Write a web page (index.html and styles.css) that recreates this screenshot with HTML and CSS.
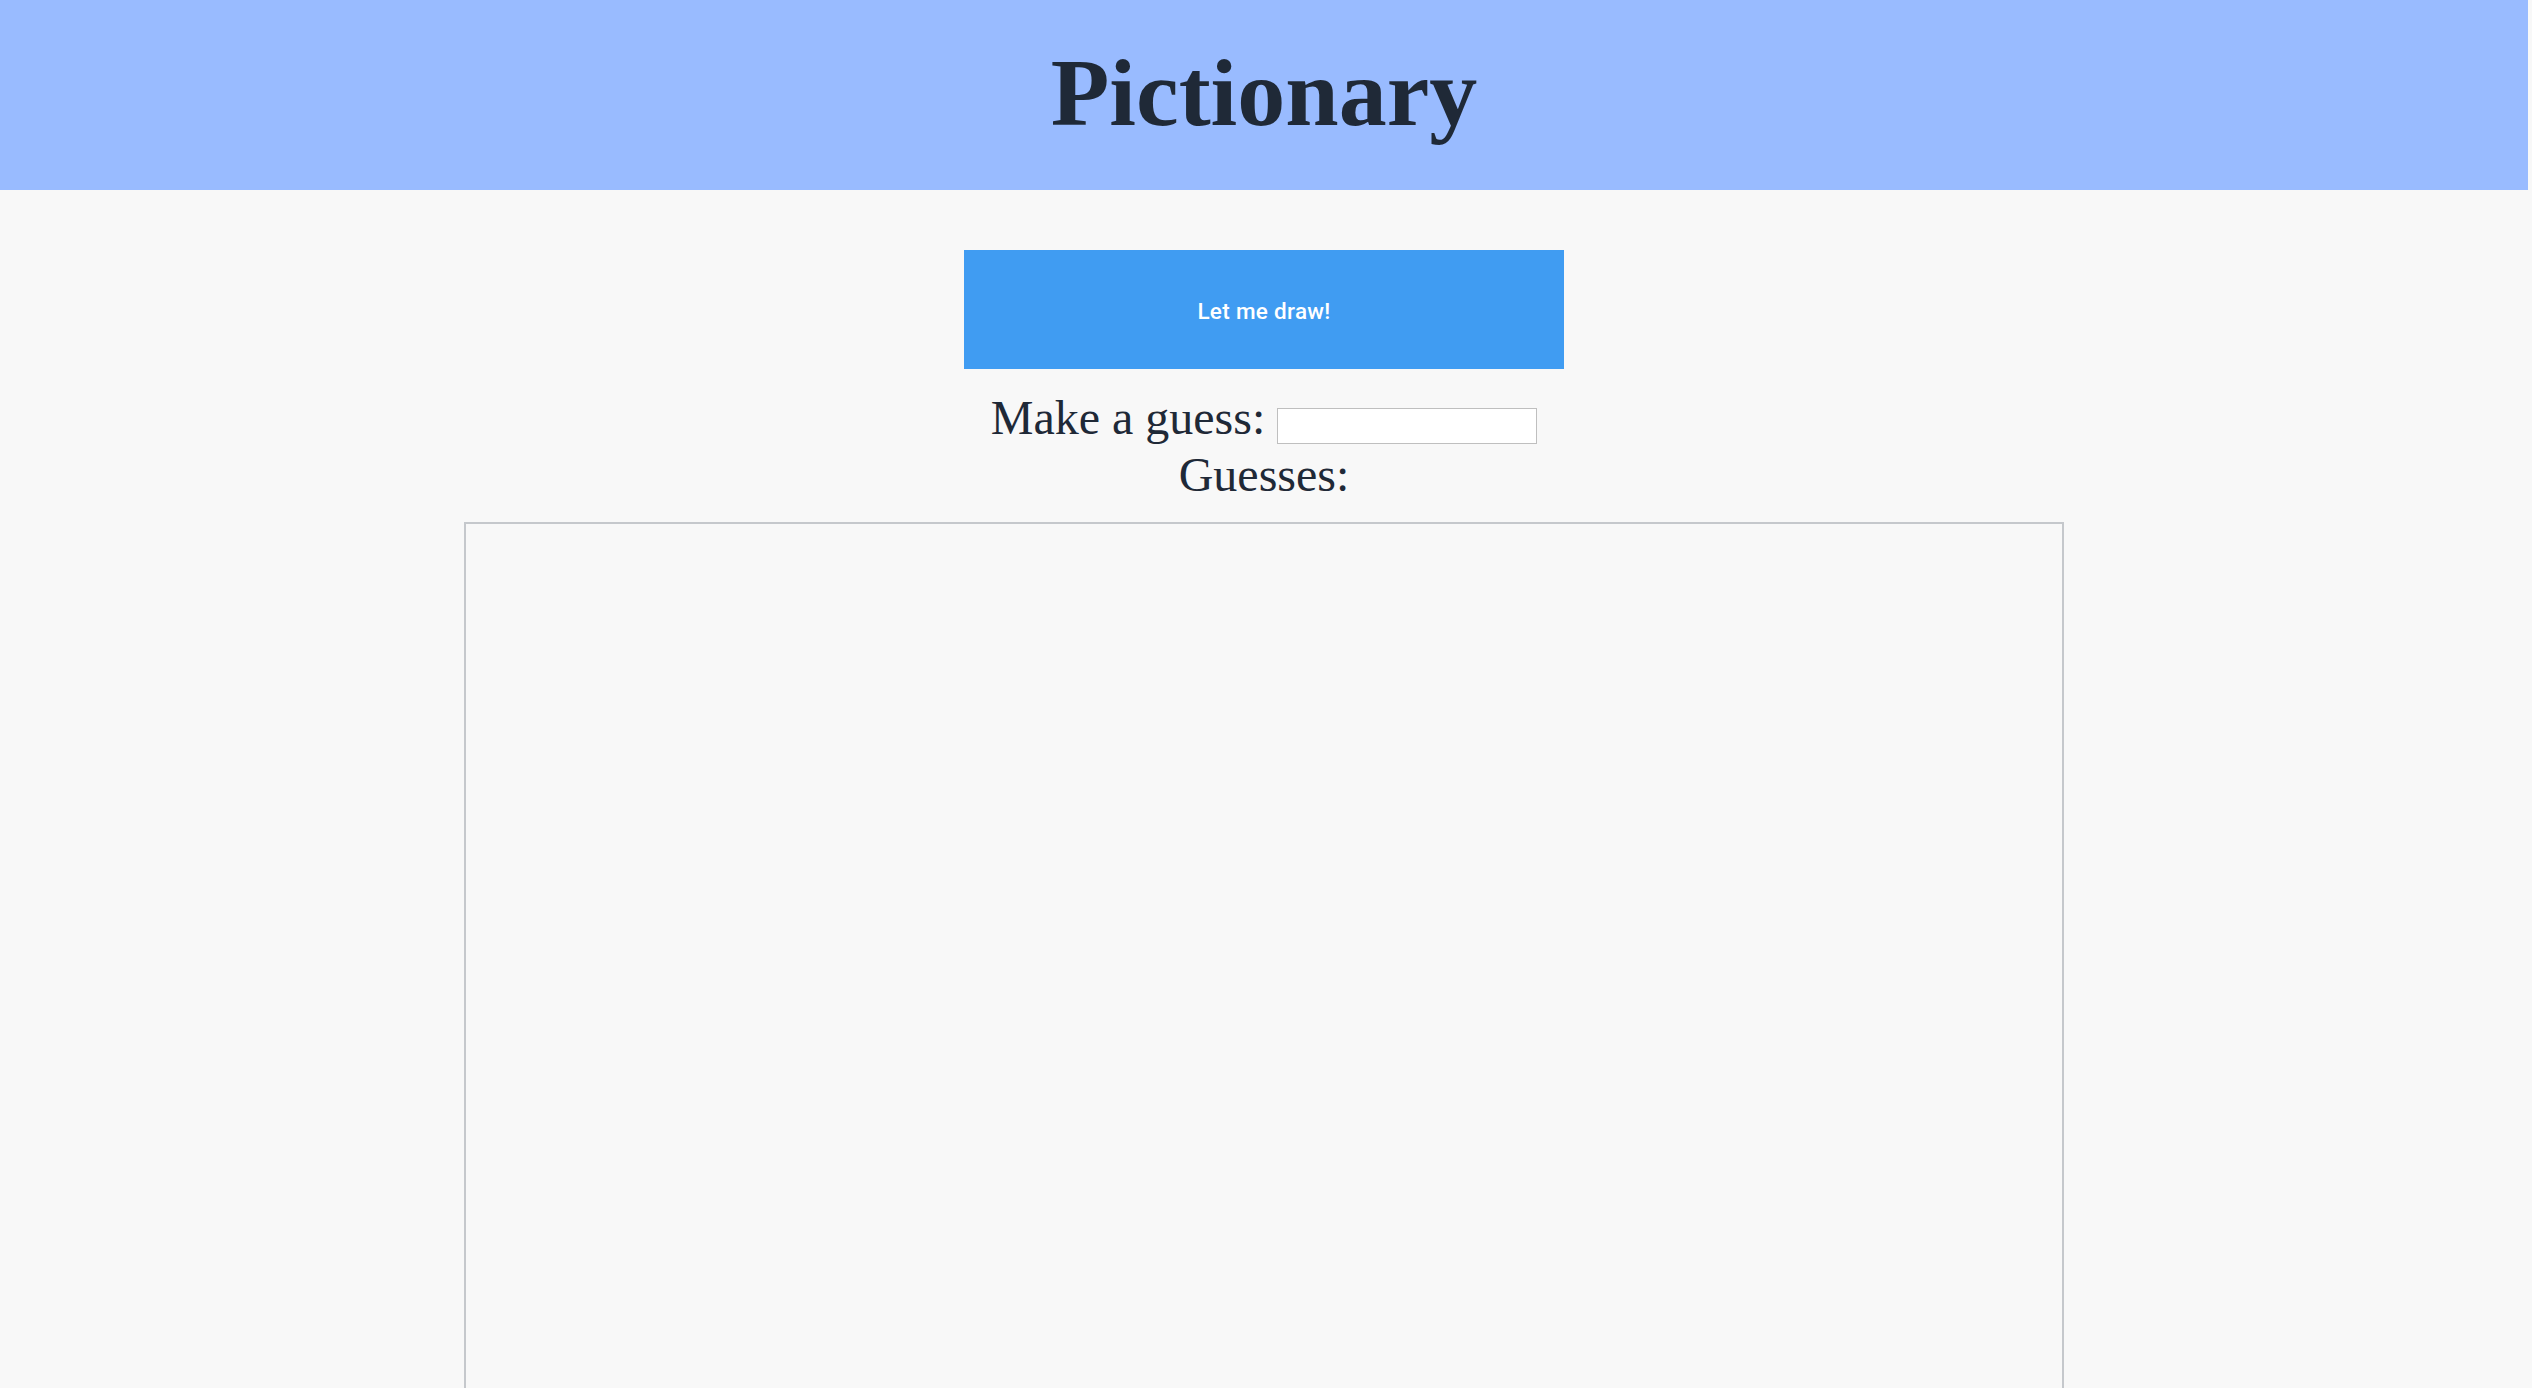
FILE: index.html
```html
<!DOCTYPE html>
<html lang="en">
<head>
<meta charset="utf-8">
<title>Pictionary</title>
<link rel="stylesheet" href="styles.css">
</head>
<body>
<div class="page">
  <header class="header">
    <h1 class="title">Pictionary</h1>
  </header>
  <main class="main">
    <button class="draw-btn" type="button">Let me draw!</button>
    <div class="guess-area">
      <div class="guess-line">Make a guess: <input class="guess-input" type="text"></div>
      <div class="guesses-line">Guesses: <span class="guesses"></span></div>
    </div>
    <canvas class="board" width="1596" height="1000"></canvas>
  </main>
</div>
</body>
</html>
```
FILE: styles.css
```css
html, body {
  margin: 0;
  padding: 0;
  background: #f8f8f8;
}

body {
  overflow: hidden;
}

.page {
  width: 2528px;
}

.header {
  height: 190px;
  box-sizing: border-box;
  padding-top: 38px;
  background: #99bbff;
  text-align: center;
}

.title {
  margin: 0;
  font-family: "Liberation Serif", "Times New Roman", serif;
  font-weight: bold;
  font-size: 96px;
  line-height: 1.15;
  color: #1f2937;
}

.main {
  display: flex;
  flex-direction: column;
  align-items: center;
}

.draw-btn {
  margin-top: 60px;
  width: 600px;
  height: 119px;
  border: none;
  border-radius: 0;
  background: #409cf2;
  color: #ffffff;
  font-family: Roboto, "Liberation Sans", Arial, sans-serif;
  font-weight: 500;
  font-size: 22.5px;
  letter-spacing: 0.3px;
  padding: 3px 0 0 0;
}

.guess-area {
  margin-top: 20px;
  text-align: center;
  font-family: "Liberation Serif", "Times New Roman", serif;
  font-size: 48px;
  line-height: 57px;
  color: #1f2937;
}

.guess-input {
  box-sizing: border-box;
  width: 260px;
  height: 36px;
  margin: 0;
  padding: 0 4px;
  border: 1px solid #bfbfbf;
  border-radius: 0;
  background: #ffffff;
  vertical-align: text-bottom;
  font-size: 16px;
}

.board {
  display: block;
  margin-top: 19px;
  width: 1596px;
  height: 1000px;
  border: 2px solid #c5c8cc;
  background: #f8f8f8;
}
```
